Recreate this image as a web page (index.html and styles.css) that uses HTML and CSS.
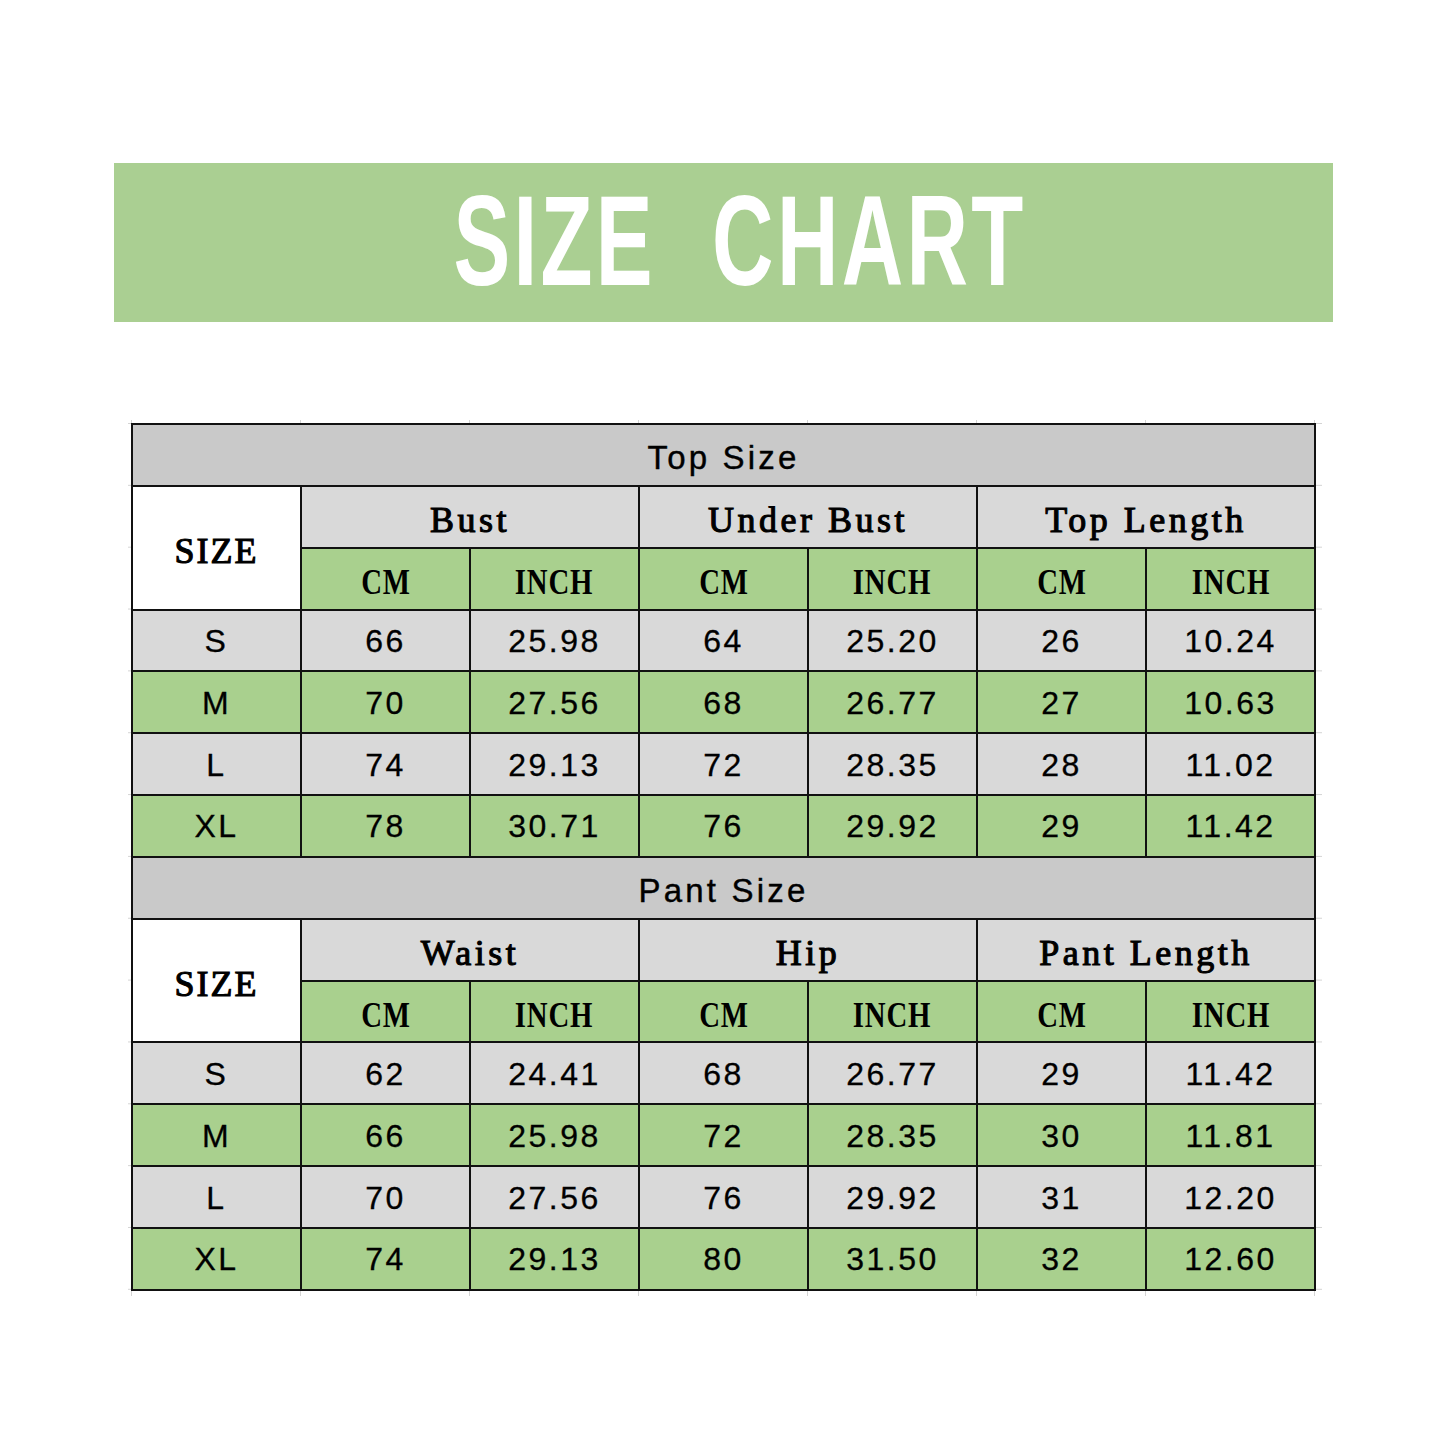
FILE: index.html
```html
<!DOCTYPE html>
<html>
<head>
<meta charset="utf-8">
<title>Size Chart</title>
<link rel="stylesheet" href="styles.css">
</head>
<body>
<div class="page">
  <div class="banner"><span class="title">SIZE CHART</span></div>
  <div class="sheet">
    <table class="chart">
      <colgroup>
        <col><col><col><col><col><col><col>
      </colgroup>
      <tbody>
        <tr><th colspan="7" class="sect">Top Size</th></tr>
        <tr>
          <th rowspan="2" class="size"><span class="serif">SIZE</span></th>
          <th colspan="2" class="grp"><span class="serif">Bust</span></th>
          <th colspan="2" class="grp"><span class="serif">Under Bust</span></th>
          <th colspan="2" class="grp"><span class="serif">Top Length</span></th>
        </tr>
        <tr class="units">
          <th><span class="serif">CM</span></th><th><span class="serif">INCH</span></th>
          <th><span class="serif">CM</span></th><th><span class="serif">INCH</span></th>
          <th><span class="serif">CM</span></th><th><span class="serif">INCH</span></th>
        </tr>
        <tr class="gray"><td>S</td><td>66</td><td>25.98</td><td>64</td><td>25.20</td><td>26</td><td>10.24</td></tr>
        <tr class="green"><td>M</td><td>70</td><td>27.56</td><td>68</td><td>26.77</td><td>27</td><td>10.63</td></tr>
        <tr class="gray"><td>L</td><td>74</td><td>29.13</td><td>72</td><td>28.35</td><td>28</td><td>11.02</td></tr>
        <tr class="green"><td>XL</td><td>78</td><td>30.71</td><td>76</td><td>29.92</td><td>29</td><td>11.42</td></tr>

        <tr><th colspan="7" class="sect">Pant Size</th></tr>
        <tr>
          <th rowspan="2" class="size"><span class="serif">SIZE</span></th>
          <th colspan="2" class="grp"><span class="serif">Waist</span></th>
          <th colspan="2" class="grp"><span class="serif">Hip</span></th>
          <th colspan="2" class="grp"><span class="serif">Pant Length</span></th>
        </tr>
        <tr class="units">
          <th><span class="serif">CM</span></th><th><span class="serif">INCH</span></th>
          <th><span class="serif">CM</span></th><th><span class="serif">INCH</span></th>
          <th><span class="serif">CM</span></th><th><span class="serif">INCH</span></th>
        </tr>
        <tr class="gray"><td>S</td><td>62</td><td>24.41</td><td>68</td><td>26.77</td><td>29</td><td>11.42</td></tr>
        <tr class="green"><td>M</td><td>66</td><td>25.98</td><td>72</td><td>28.35</td><td>30</td><td>11.81</td></tr>
        <tr class="gray"><td>L</td><td>70</td><td>27.56</td><td>76</td><td>29.92</td><td>31</td><td>12.20</td></tr>
        <tr class="green"><td>XL</td><td>74</td><td>29.13</td><td>80</td><td>31.50</td><td>32</td><td>12.60</td></tr>
      </tbody>
    </table>
  </div>
</div>
</body>
</html>
```

FILE: styles.css
```css
html, body {
  margin: 0;
  padding: 0;
  background: #ffffff;
}

.page {
  width: 1445px;
  height: 1445px;
  padding-top: 163px;
  box-sizing: border-box;
}

.banner {
  margin-left: 114px;
  width: 1219px;
  height: 159px;
  background: #aacf92;
  display: flex;
  align-items: center;
  justify-content: center;
}

.title {
  display: inline-block;
  font-family: "Liberation Sans", Arial, sans-serif;
  font-weight: bold;
  font-size: 128px;
  line-height: 1;
  color: #ffffff;
  letter-spacing: 5px;
  word-spacing: 44px;
  transform: scaleX(0.665);
  white-space: nowrap;
  margin-top: -4px;
  margin-left: 32px;
}

.sheet {
  margin-top: 98px;
  margin-left: 128px;
  width: 1194px;
  padding: 3px 8px 5px 3px;
  box-sizing: border-box;
  background-image:
    linear-gradient(to right, #d4d4d4 1px, transparent 1px),
    linear-gradient(to bottom, #d4d4d4 1px, transparent 1px);
  background-size: 169px 100%, 100% 61.857px;
  background-position: 3px 0, 0 3px;
}

.chart {
  width: 1183px;
  table-layout: fixed;
  border-collapse: collapse;
  font-family: "Liberation Sans", Arial, sans-serif;
  color: #000;
}

.chart col {
  width: 169px;
}

.chart tr {
  height: 61.857px;
}

.chart th,
.chart td {
  border: 2px solid #111;
  padding: 0;
  text-align: center;
  vertical-align: middle;
  font-weight: normal;
  white-space: nowrap;
}

.chart td {
  font-size: 32px;
  letter-spacing: 2.5px;
  padding-top: 2px;
  -webkit-text-stroke: 0.3px #000;
}

.sect {
  background: #c9c9c9;
  font-size: 33px;
  letter-spacing: 3.2px;
  padding-top: 6px !important;
  -webkit-text-stroke: 0.4px #000;
}

.grp {
  background: #d9d9d9;
}

.size {
  background: #ffffff;
}

.units th {
  background: #a9d08e;
}

.gray td {
  background: #d9d9d9;
}

.green td {
  background: #a9d08e;
}

.serif {
  display: inline-block;
  font-family: "Liberation Serif", "Times New Roman", serif;
  font-weight: normal;
  -webkit-text-stroke: 1.1px #000;
  font-size: 36px;
  line-height: 1;
  margin-top: 6px;
}

.grp .serif {
  letter-spacing: 3.5px;
}

.size .serif {
  letter-spacing: 2px;
}

.units .serif {
  font-weight: bold;
  -webkit-text-stroke: 0;
  transform: scaleX(0.8);
  letter-spacing: 1px;
}
```
